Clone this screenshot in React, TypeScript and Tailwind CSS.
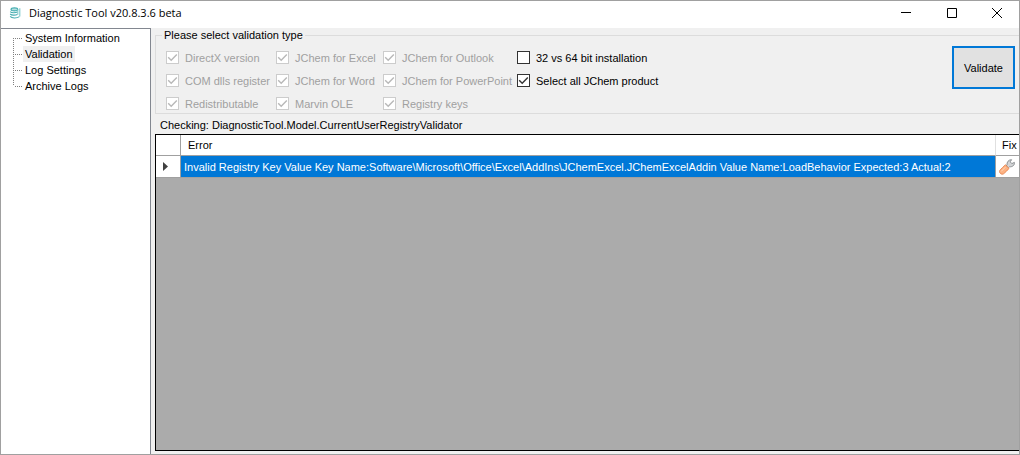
import React, { useState } from 'react';

const treeItems = ['System Information', 'Validation', 'Log Settings', 'Archive Logs'];

interface Option {
  label: string;
  checked: boolean;
  disabled: boolean;
}

// Filled row by row, four options per row
const options: Option[] = [
  { label: 'DirectX version', checked: true, disabled: true },
  { label: 'JChem for Excel', checked: true, disabled: true },
  { label: 'JChem for Outlook', checked: true, disabled: true },
  { label: '32 vs 64 bit installation', checked: false, disabled: false },
  { label: 'COM dlls register', checked: true, disabled: true },
  { label: 'JChem for Word', checked: true, disabled: true },
  { label: 'JChem for PowerPoint', checked: true, disabled: true },
  { label: 'Select all JChem product', checked: true, disabled: false },
  { label: 'Redistributable', checked: true, disabled: true },
  { label: 'Marvin OLE', checked: true, disabled: true },
  { label: 'Registry keys', checked: true, disabled: true },
];

const errors = [
  'Invalid Registry Key Value Key Name:Software\\Microsoft\\Office\\Excel\\AddIns\\JChemExcel.JChemExcelAddin Value Name:LoadBehavior Expected:3 Actual:2',
];

function AppIcon() {
  return (
    <svg className="h-3 w-3" viewBox="0 0 12 12" fill="none" stroke="#45adb0" strokeWidth="1.1">
      <ellipse cx="5.4" cy="2.4" rx="3.4" ry="1.5" fill="#b5dfe0" />
      <path d="M1.2 4.6c1.4 1.4 5 1.5 7.2.4M1.2 7c1.4 1.4 5 1.5 7.2.4M1.2 9.4c1.6 2 6.6 2 9.2.2" />
      <path d="M10.8 1.2v8.4M8.8 2.6v5.2" stroke="#7cc8ca" />
    </svg>
  );
}

function WrenchIcon() {
  return (
    <svg className="h-4 w-4" viewBox="0 0 16 16">
      <path
        d="M8 6.2 C7.6 3 9.6 .6 12.6 .7 L11.2 2.8 L12.8 4.6 L15.4 3.4 C15.9 6 13.6 8 10.6 7.8 L9.4 8.8 L7 6.8 Z"
        fill="#d2d4d6"
        stroke="#85898c"
        strokeWidth=".9"
      />
      <path
        d="M6.4 5.8 L10 9.4 C8.6 11.6 6.4 13 4.6 14.8 C2.6 16.2 -.4 13.8 .8 11.4 C2.2 9.4 4.6 7.8 6.4 5.8 Z"
        fill="#fdb282"
        stroke="#e88550"
        strokeWidth=".9"
      />
      <path d="M2.2 12.4 L6.4 8.2" stroke="#ffd9bd" strokeWidth="1" />
    </svg>
  );
}

function TitleBar() {
  return (
    <header className="flex h-[27px] items-center bg-white pb-[3px] pl-2">
      <AppIcon />
      <h1 className="ml-2 flex-1 font-['Open_Sans',sans-serif] text-[11px] leading-4">Diagnostic Tool v20.8.3.6 beta</h1>
      <button type="button" aria-label="Minimize" className="flex h-full w-[46px] items-center justify-center">
        <svg className="h-3 w-3" viewBox="0 0 12 12" stroke="#000" fill="none">
          <path d="M1 5.5h10" />
        </svg>
      </button>
      <button type="button" aria-label="Maximize" className="flex h-full w-[46px] items-center justify-center">
        <svg className="h-3 w-3" viewBox="0 0 12 12" stroke="#000" fill="none">
          <path d="M1.5 1.5h9v9h-9z" />
        </svg>
      </button>
      <button type="button" aria-label="Close" className="flex h-full w-[44px] items-center justify-center">
        <svg className="h-3 w-3" viewBox="0 0 12 12" stroke="#000" fill="none">
          <path d="M1 1l10 10M11 1L1 11" />
        </svg>
      </button>
    </header>
  );
}

function NavTree() {
  const [selected, setSelected] = useState('Validation');

  return (
    <nav className="w-[150px] shrink-0 border-t border-r border-[#828790] bg-white pt-px pl-3">
      <ul>
        {treeItems.map((item) => (
          <li key={item} className="group flex h-4 items-center">
            {/* Dotted connector lines */}
            <span className="h-4 w-px bg-[repeating-linear-gradient(to_bottom,#808080_0_1px,transparent_1px_2px)] group-first:mt-4 group-first:h-2 group-first:self-end group-last:h-2 group-last:self-start" />
            <span className="h-px w-[9px] bg-[repeating-linear-gradient(to_right,transparent_0_1px,#808080_1px_2px)]" />
            <button
              type="button"
              onClick={() => setSelected(item)}
              className={`h-4 px-[2px] leading-4 ${selected === item ? 'bg-[#f0f0f0]' : ''}`}
            >
              {item}
            </button>
          </li>
        ))}
      </ul>
    </nav>
  );
}

function CheckOption({ label, checked, disabled }: Option) {
  return (
    <label className={`flex h-[15px] items-center gap-[6px] whitespace-nowrap ${disabled ? 'text-[#a0a0a0]' : 'text-black'}`}>
      <span className="grid h-[13px] w-[13px]">
        <input
          type="checkbox"
          defaultChecked={checked}
          disabled={disabled}
          className="peer col-start-1 row-start-1 h-[13px] w-[13px] appearance-none border border-[#333] bg-white disabled:border-[#ccc]"
        />
        <svg
          className="pointer-events-none invisible col-start-1 row-start-1 h-[13px] w-[13px] text-[#333] peer-checked:visible peer-disabled:text-[#b8b8b8]"
          viewBox="0 0 13 13"
          fill="none"
          stroke="currentColor"
          strokeWidth="1.4"
        >
          <path d="M2.2 6.2L5.2 9.2L10.8 3.4" />
        </svg>
      </span>
      {label}
    </label>
  );
}

function ValidationOptions() {
  return (
    <fieldset className="ml-1 min-w-0 border border-r-0 border-[#dcdcdc] pb-[2px]">
      <legend className="ml-[6px] h-[14px] px-[2px] leading-[14px]">Please select validation type</legend>
      <div className="flex items-start justify-between pt-1 pr-1 pl-[10px]">
        <div className="grid grid-cols-[110px_107px_134px_auto] gap-y-2 pt-1">
          {options.map((option) => (
            <CheckOption key={option.label} {...option} />
          ))}
        </div>
        <button type="button" className="h-[43px] w-[63px] border-2 border-[#0078d7] bg-[#e1e1e1]">
          Validate
        </button>
      </div>
    </fieldset>
  );
}

function ErrorGrid() {
  return (
    <div className="ml-1 flex-1 border border-r-0 border-black bg-[#ababab]">
      <table className="w-full table-fixed border-separate border-spacing-0 text-left">
        <thead>
          <tr className="h-[21px] bg-white">
            <th aria-label="Row" className="w-[25px] border-r border-b border-[#a0a0a0]" />
            <th className="border-r border-b border-[#a0a0a0] border-r-[#e0e0e0] pl-[7px] font-normal">Error</th>
            <th className="w-[23px] border-b border-[#a0a0a0] pl-[6px] font-normal">Fix</th>
          </tr>
        </thead>
        <tbody>
          {errors.map((error) => (
            <tr key={error} className="h-[22px]">
              <td className="border-r border-b border-[#a0a0a0] bg-white pl-[7px]">
                <svg className="h-[9px] w-[5px]" viewBox="0 0 5 9" fill="#404040">
                  <path d="M0 0L5 4.5L0 9z" />
                </svg>
              </td>
              <td className="truncate border-r border-b border-[#a0a0a0] bg-[#0078d7] pl-[3px] text-white">{error}</td>
              <td className="border-b border-[#a0a0a0] bg-white pl-[3px]">
                <button type="button" aria-label="Fix" className="block">
                  <WrenchIcon />
                </button>
              </td>
            </tr>
          ))}
        </tbody>
      </table>
    </div>
  );
}

export default function App() {
  return (
    <div className="flex min-h-screen flex-col border border-[#a0a0a0] bg-[#f0f0f0] font-['Liberation_Sans',Arial,sans-serif] text-[11px] leading-4 text-black">
      <TitleBar />
      <div className="flex flex-1">
        <NavTree />
        <main className="flex min-w-0 flex-1 flex-col pb-[3px]">
          <ValidationOptions />
          <p className="h-5 pt-[3px] pl-[9px]">Checking: DiagnosticTool.Model.CurrentUserRegistryValidator</p>
          <ErrorGrid />
        </main>
      </div>
    </div>
  );
}
